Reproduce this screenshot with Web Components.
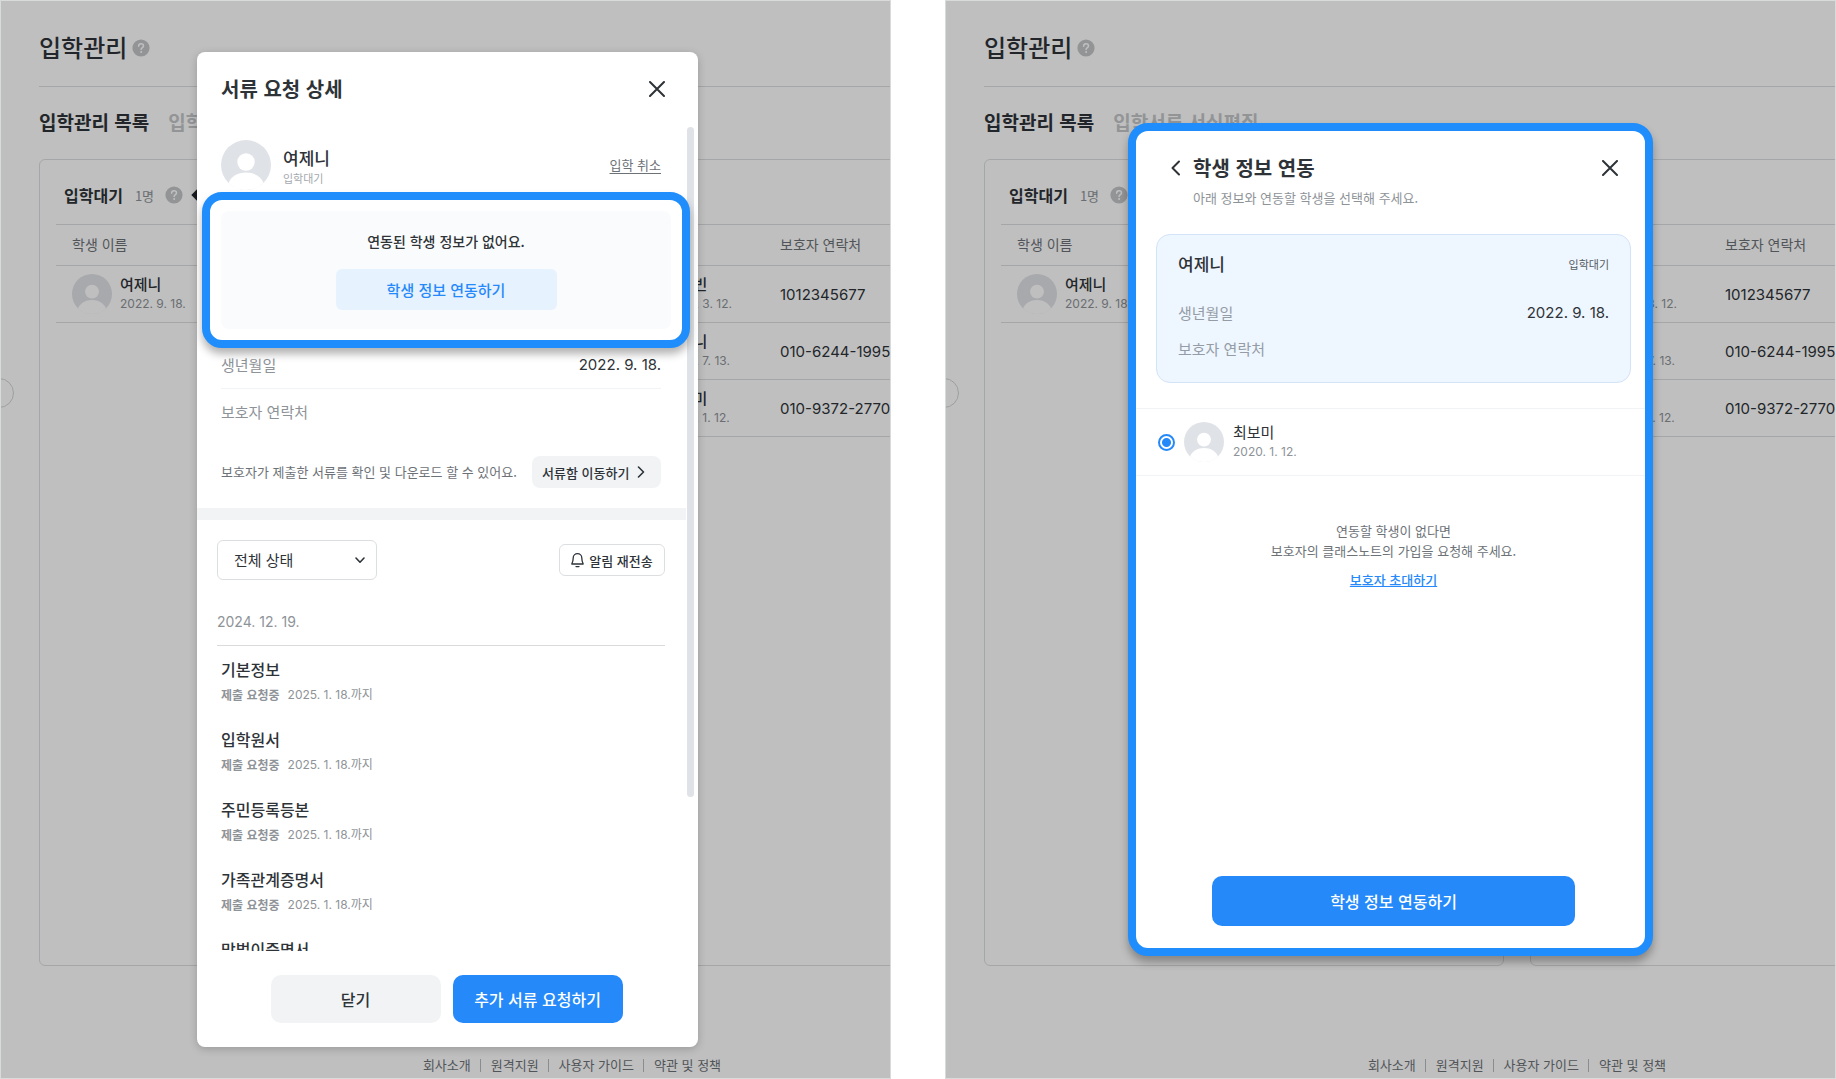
<!DOCTYPE html>
<html lang="ko">
<head>
<meta charset="UTF-8">
<meta name="viewport" content="width=device-width, initial-scale=1.0">
<title>입학관리</title>
<style>
    body {
        margin: 0;
        min-height: 100vh;
        display: grid;
        grid-template-columns: minmax(0, 1fr) minmax(0, 1fr);
        gap: 54px;
        background: #fff;
        color: #2e3338;
        font-family: "Noto Sans CJK KR", sans-serif;
        font-size: 15px;
        --num: Inter, "Noto Sans CJK KR", sans-serif;
        --blue: #2589fa;
        --frame: #1f8dfb;
    }
</style>
</head>
<body>
    <app-screen>
        <admission-page></admission-page>
        <request-modal slot="modal"></request-modal>
    </app-screen>
    <app-screen centered>
        <admission-page></admission-page>
        <link-modal slot="modal"></link-modal>
    </app-screen>

<script>
    class UserAvatar extends HTMLElement {
        constructor() {
            super();
            this.attachShadow({ mode: 'open' });
            this.shadowRoot.innerHTML = `
                <style>
                    :host { display: block; flex: none; width: 40px; height: 40px; }
                    svg { display: block; width: 100%; height: 100%; }
                </style>
                <svg viewBox="0 0 50 50" aria-hidden="true">
                    <circle cx="25" cy="25" r="25" fill="#dfe2e7"/>
                    <circle cx="25" cy="22" r="8.7" fill="#fff"/>
                    <path d="M7.5 43C10 36.500 17 32.500 25 32.500S40 36.500 42.500 43C38 47.500 32 50 25 50S12 47.500 7.500 43Z" fill="#fff"/>
                </svg>
            `;
        }
    }

    class HelpButton extends HTMLElement {
        constructor() {
            super();
            this.attachShadow({ mode: 'open' });
            this.shadowRoot.innerHTML = `
                <style>
                    :host { display: block; flex: none; width: 18px; height: 18px; }
                    button { display: block; width: 100%; height: 100%; padding: 0; border: 0; background: none; }
                    svg { display: block; width: 100%; height: 100%; }
                </style>
                <button type="button" aria-label="도움말">
                    <svg viewBox="0 0 18 18" fill="none">
                        <circle cx="9" cy="9" r="8.600" fill="#c3c6c9"/>
                        <path d="M6.600 7.200C6.600 5.700 7.700 4.800 9.100 4.800S11.500 5.700 11.500 7C11.500 8.700 9.100 8.700 9.100 10.500" stroke="#fff" stroke-width="1.500" stroke-linecap="round"/>
                        <circle cx="9.100" cy="13" r="1" fill="#fff"/>
                    </svg>
                </button>
            `;
        }
    }

    // one browser window: the page, a dimmed layer and a modal on top
    class AppScreen extends HTMLElement {
        constructor() {
            super();
            this.attachShadow({ mode: 'open' });
            this.shadowRoot.innerHTML = `
                <style>
                    :host { display: grid; position: relative; overflow: hidden; border: 1px solid #d9dbdb; background: #fff; }
                    .dim { position: absolute; inset: 0; display: grid; justify-content: start; padding: 51px 0 31px 196px; background: rgba(0, 0, 0, 0.25); }
                    :host([centered]) .dim { justify-content: center; padding: 122px 0; }
                </style>
                <slot></slot>
                <div class="dim"><slot name="modal"></slot></div>
            `;
        }
    }

    class StudentTable extends HTMLElement {
        connectedCallback() {
            const students = JSON.parse(this.getAttribute('students'));
            const rows = students.map(([name, birth, phone]) => `
                <tr>
                    <td>
                        <div class="student">
                            <user-avatar></user-avatar>
                            <div><b>${name}</b><span>${birth}</span></div>
                        </div>
                    </td>
                    <td class="phone">${phone}</td>
                </tr>
            `).join('');

            this.attachShadow({ mode: 'open' });
            this.shadowRoot.innerHTML = `
                <style>
                    :host { display: block; box-sizing: border-box; padding: 0 16px; border: 1px solid #dcdee0; border-radius: 6px; }
                    header { display: flex; align-items: center; height: 64px; padding-top: 6px; padding-left: 8px; box-sizing: border-box; }
                    table { width: 100%; border-collapse: collapse; table-layout: fixed; }
                    th, td { box-sizing: border-box; padding: 0 16px; border-top: 1px solid #dcdee0; border-bottom: 1px solid #dcdee0; text-align: left; white-space: nowrap; }
                    th { height: 41px; padding-bottom: 2px; color: #6d7277; font-size: 14px; font-weight: 400; }
                    th:first-child { width: 162px; }
                    td { height: 57px; }
                    .student { display: flex; align-items: center; gap: 8px; }
                    b, span { display: block; line-height: 20px; }
                    b { font-weight: 500; }
                    span { color: #8e9398; font: 12px/20px var(--num); }
                    .phone { font-family: var(--num); }
                </style>
                <header><slot></slot></header>
                <table>
                    <thead><tr><th>학생 이름</th><th>${students[0][2] ? '보호자 연락처' : ''}</th></tr></thead>
                    <tbody>${rows}</tbody>
                </table>
            `;
        }
    }

    class AdmissionPage extends HTMLElement {
        constructor() {
            super();
            this.attachShadow({ mode: 'open' });
            this.shadowRoot.innerHTML = `
                <style>
                    :host { display: flex; flex-direction: column; box-sizing: border-box; min-width: 1142px; padding: 0 38px; }
                    .top { display: flex; align-items: center; gap: 5px; height: 86px; padding-top: 8px; box-sizing: border-box; border-bottom: 1px solid #dcdee0; }
                    h1, h2 { margin: 0; }
                    h1 { font-size: 24px; font-weight: 500; line-height: 32px; padding-bottom: 2px; }
                    nav { display: flex; gap: 19px; align-items: center; height: 72px; padding-bottom: 4px; box-sizing: border-box; font-size: 19px; font-weight: 700; }
                    nav a { color: #c3c6c9; text-decoration: none; }
                    nav a[aria-current] { color: inherit; }
                    main { flex: 1; display: grid; grid-template-columns: 520px 520px; gap: 26px; }
                    h2 { font-size: 16px; font-weight: 700; }
                    .count { margin: 0 11px 0 12px; color: #8e9398; font-size: 13px; }
                    .tip { width: 8px; height: 8px; margin-left: 10px; background: #202327; transform: rotate(45deg); }
                    footer { display: flex; justify-content: center; align-items: end; height: 112px; padding-bottom: 3px; box-sizing: border-box; font-size: 13px; line-height: 20px; }
                    footer a { padding: 0 10px; color: #6d7277; text-decoration: none; background: linear-gradient(#b9bcbf, #b9bcbf) right / 1px 13px no-repeat; }
                    footer a:last-child { background: none; }
                    .fold { position: absolute; left: -17px; top: 377px; width: 30px; height: 30px; padding: 0; border: 1px solid #d2d4d6; border-radius: 50%; background: #fff; }
                </style>
                <div class="top"><h1>입학관리</h1><help-button></help-button></div>
                <nav><a href="#list" aria-current="page">입학관리 목록</a><a href="#forms">입학서류 서식편집</a></nav>
                <main>
                    <student-table students='[["여제니", "2022. 9. 18.", ""]]'>
                        <h2>입학대기</h2><span class="count">1명</span><help-button></help-button><i class="tip"></i>
                    </student-table>
                    <student-table students='[["정수빈", "2020. 3. 12.", "1012345677"], ["이하니", "2020. 7. 13.", "010-6244-1995"], ["최보미", "2020. 1. 12.", "010-9372-2770"]]'></student-table>
                </main>
                <footer>
                    <a href="#about">회사소개</a><a href="#remote">원격지원</a><a href="#guide">사용자 가이드</a><a href="#terms">약관 및 정책</a>
                </footer>
                <button class="fold" type="button" aria-label="메뉴 접기"></button>
            `;
        }
    }

    const closeIcon = `<svg width="16" height="16" viewBox="0 0 16 16" fill="none" stroke="#2e3338" stroke-width="2" stroke-linecap="round"><path d="M1 1L15 15M15 1L1 15"/></svg>`;

    class RequestModal extends HTMLElement {
        constructor() {
            super();
            this.attachShadow({ mode: 'open' });
            const due = '<p><strong>제출 요청중</strong><span>2025. 1. 18.까지</span></p>';
            const docs = [['기본정보', due], ['입학원서', due], ['주민등록등본', due], ['가족관계증명서', due], ['맞벌이증명서', '']];

            this.shadowRoot.innerHTML = `
                <style>
                    :host { display: flex; flex-direction: column; width: 501px; min-height: 0; border-radius: 8px; background: #fff; box-shadow: 0 2px 8px rgba(0, 0, 0, 0.2); }
                    button, select { font: inherit; color: inherit; border: 0; padding: 0; }
                    svg { display: block; flex: none; }
                    .head { display: flex; justify-content: space-between; align-items: center; height: 75px; box-sizing: border-box; padding: 0 33px 2px 24px; }
                    h2, h3, p, dl, dd, ul { margin: 0; padding: 0; }
                    h2 { font-size: 20px; font-weight: 700; }
                    .close { background: none; }
                    .body { position: relative; flex: 1; min-height: 0; overflow: hidden; }
                    .thumb { position: absolute; top: 0; right: 4px; width: 7px; height: 670px; border-radius: 4px; background: #dfe2e6; }
                    .profile { display: flex; align-items: center; gap: 12px; padding: 13px 37px 0 24px; }
                    .profile user-avatar { width: 50px; height: 50px; }
                    .profile div { flex: 1; }
                    .profile b { display: block; padding-top: 2px; font-size: 17px; font-weight: 500; line-height: 24px; }
                    .profile span { display: block; color: #a4a9ae; font-size: 11px; line-height: 16px; }
                    .profile a { color: #6d7277; font-size: 13px; line-height: 20px; text-underline-offset: 3px; }
                    .linkbox { position: relative; z-index: 1; margin: 2px 8px 0 5px; padding: 11px; border: 8px solid var(--frame); border-radius: 20px; background: #fff; box-shadow: 0 6px 8px rgba(0, 0, 0, 0.3); }
                    .linkbox div { display: flex; flex-direction: column; align-items: center; gap: 18px; padding: 20px 0 19px; border-radius: 8px; background: #fafbfc; font-size: 14px; font-weight: 500; line-height: 20px; }
                    .linkbox button { width: 221px; height: 41px; border-radius: 6px; background: #e7f2ff; color: var(--blue); font-size: 15px; }
                    dl { margin: 6px 37px 0 24px; }
                    dl div { display: flex; justify-content: space-between; padding-bottom: 12px; line-height: 22px; }
                    dl div + div { padding-top: 12px; border-top: 1px solid #f1f3f5; }
                    dt { color: #8e9398; }
                    dd { font-family: var(--num); }
                    .move { display: flex; justify-content: space-between; align-items: center; margin: 21px 37px 20px 24px; color: #6d7277; font-size: 13px; }
                    .move p { padding-bottom: 2px; }
                    .move button { display: flex; align-items: center; justify-content: space-between; width: 129px; height: 32px; padding: 0 16px 0 10px; box-sizing: border-box; border-radius: 8px; background: #f1f3f5; color: #2e3338; font-weight: 500; }
                    hr { height: 12px; margin: 0 12px 0 0; border: 0; background: #f1f3f4; }
                    .filter { display: flex; justify-content: space-between; align-items: center; margin: 20px 33px 0 20px; }
                    .select { display: grid; align-items: center; }
                    .select > * { grid-area: 1 / 1; }
                    .select svg { justify-self: end; margin-right: 12px; pointer-events: none; }
                    select { appearance: none; width: 160px; height: 40px; padding: 0 16px 2px; border: 1px solid #dcdee0; border-radius: 6px; background: #fff; }
                    .filter button { display: flex; align-items: center; justify-content: center; gap: 5px; width: 106px; height: 32px; border: 1px solid #dcdee0; border-radius: 6px; background: #fff; font-size: 13px; font-weight: 500; }
                    h3 { margin: 32px 33px 0 20px; padding-bottom: 13px; border-bottom: 1px solid #d8dadc; color: #8e9398; font: 14px/20px var(--num); }
                    ul { display: grid; gap: 22px; padding: 11px 24px 0; list-style: none; }
                    li b { display: block; margin-bottom: 4px; font-size: 16px; font-weight: 500; line-height: 24px; }
                    li p { display: flex; gap: 8px; color: #8e9398; font-size: 12px; line-height: 20px; }
                    li strong { font-weight: 700; }
                    li span { font-family: var(--num); }
                    .foot { display: flex; justify-content: center; gap: 12px; padding: 24px 2px 24px 0; }
                    .foot button { width: 170px; height: 48px; border-radius: 10px; background: #f1f3f5; font-size: 16px; font-weight: 500; }
                    .foot .primary { background: var(--blue); color: #fff; }
                </style>
                <div class="head">
                    <h2>서류 요청 상세</h2>
                    <button class="close" type="button" aria-label="창 닫기">${closeIcon}</button>
                </div>
                <div class="body">
                    <div class="thumb"></div>
                    <div class="profile">
                        <user-avatar></user-avatar>
                        <div><b>여제니</b><span>입학대기</span></div>
                        <a href="#cancel">입학 취소</a>
                    </div>
                    <div class="linkbox">
                        <div>연동된 학생 정보가 없어요.<button type="button">학생 정보 연동하기</button></div>
                    </div>
                    <dl>
                        <div><dt>생년월일</dt><dd>2022. 9. 18.</dd></div>
                        <div><dt>보호자 연락처</dt><dd></dd></div>
                    </dl>
                    <div class="move">
                        <p>보호자가 제출한 서류를 확인 및 다운로드 할 수 있어요.</p>
                        <button type="button">서류함 이동하기
                            <svg width="8" height="12" viewBox="0 0 8 12" fill="none" stroke="#2e3338" stroke-width="1.600" stroke-linecap="round" stroke-linejoin="round"><path d="M1.500 1L6.500 6L1.500 11"/></svg>
                        </button>
                    </div>
                    <hr>
                    <div class="filter">
                        <div class="select">
                            <select aria-label="상태"><option>전체 상태</option></select>
                            <svg width="10" height="7" viewBox="0 0 10 7" fill="none" stroke="#2e3338" stroke-width="1.600" stroke-linecap="round" stroke-linejoin="round"><path d="M1 1L5 5.200L9 1"/></svg>
                        </div>
                        <button type="button">
                            <svg width="13" height="16" viewBox="0 0 13 16" fill="none" stroke="#2e3338" stroke-width="1.300" stroke-linecap="round" stroke-linejoin="round"><path d="M2.200 6A4.300 4.300 0 0 1 10.800 6C10.800 8.800 11.300 10.200 12.200 12H0.800C1.700 10.200 2.200 8.800 2.200 6ZM5 14.600H8"/></svg>
                            알림 재전송
                        </button>
                    </div>
                    <h3>2024. 12. 19.</h3>
                    <ul>
                        ${docs.map(([name, state]) => `<li><b>${name}</b>${state}</li>`).join('')}
                    </ul>
                </div>
                <div class="foot">
                    <button type="button">닫기</button>
                    <button class="primary" type="button">추가 서류 요청하기</button>
                </div>
            `;
        }
    }

    class LinkModal extends HTMLElement {
        constructor() {
            super();
            this.attachShadow({ mode: 'open' });
            this.shadowRoot.innerHTML = `
                <style>
                    :host { display: flex; flex-direction: column; box-sizing: border-box; width: 525px; padding-left: 6px; border: 8px solid var(--frame); border-radius: 20px; background: #fff; box-shadow: 0 6px 8px rgba(0, 0, 0, 0.3); }
                    button { font: inherit; border: 0; padding: 0; background: none; }
                    svg { display: block; }
                    h2, p, dl, dd { margin: 0; }
                    .head { display: grid; grid-template-columns: 22px 1fr auto; align-items: center; row-gap: 6px; padding: 23px 27px 0 29px; }
                    h2 { font-size: 20px; font-weight: 700; line-height: 28px; }
                    .head p { grid-column: 2; color: #8e9398; font-size: 13px; line-height: 20px; }
                    .card { margin: 26px 14px 0; padding: 17px 21px 22px; border: 1px solid #d3e3f8; border-radius: 14px; background: #eef6ff; }
                    .name { display: flex; justify-content: space-between; align-items: center; margin-bottom: 26px; font-size: 17px; font-weight: 500; line-height: 24px; }
                    .name span { color: #555b61; font-size: 11px; font-weight: 400; }
                    dl { display: grid; gap: 14px; line-height: 22px; }
                    dl div { display: flex; justify-content: space-between; }
                    dt { color: #959ca5; }
                    dd { font-family: var(--num); }
                    label { display: flex; align-items: center; height: 66px; margin: 25px 0 0 -6px; padding-left: 22px; border: solid #f1f3f5; border-width: 1px 0; }
                    input { appearance: none; width: 17px; height: 17px; margin: 0 9px 0 0; border: 2px solid var(--blue); border-radius: 50%; background: radial-gradient(circle, var(--blue) 4px, #fff 5px); }
                    user-avatar { margin-right: 9px; }
                    label b, label span span { display: block; line-height: 20px; }
                    label b { font-weight: 400; }
                    label span span { color: #8e9398; font: 12px/20px var(--num); }
                    .empty { flex: 1; margin-top: 45px; text-align: center; color: #6d7277; font-size: 13px; line-height: 20px; }
                    .empty a { display: inline-block; margin-top: 9px; color: var(--blue); font-weight: 500; }
                    .submit { align-self: center; width: 363px; height: 50px; margin-bottom: 22px; border-radius: 10px; background: var(--blue); color: #fff; font-size: 16px; font-weight: 500; }
                </style>
                <div class="head">
                    <button type="button" aria-label="뒤로">
                        <svg width="10" height="16" viewBox="0 0 10 16" fill="none" stroke="#2e3338" stroke-width="2" stroke-linecap="round" stroke-linejoin="round"><path d="M8 1.500L1.500 8L8 14.500"/></svg>
                    </button>
                    <h2>학생 정보 연동</h2>
                    <button type="button" aria-label="창 닫기">${closeIcon}</button>
                    <p>아래 정보와 연동할 학생을 선택해 주세요.</p>
                </div>
                <div class="card">
                    <div class="name">여제니<span>입학대기</span></div>
                    <dl>
                        <div><dt>생년월일</dt><dd>2022. 9. 18.</dd></div>
                        <div><dt>보호자 연락처</dt><dd></dd></div>
                    </dl>
                </div>
                <label>
                    <input type="radio" name="student" checked>
                    <user-avatar></user-avatar>
                    <span><b>최보미</b><span>2020. 1. 12.</span></span>
                </label>
                <div class="empty">
                    <p>연동할 학생이 없다면<br>보호자의 클래스노트의 가입을 요청해 주세요.</p>
                    <a href="#invite">보호자 초대하기</a>
                </div>
                <button class="submit" type="button">학생 정보 연동하기</button>
            `;
        }
    }

    customElements.define('user-avatar', UserAvatar);
    customElements.define('help-button', HelpButton);
    customElements.define('app-screen', AppScreen);
    customElements.define('student-table', StudentTable);
    customElements.define('admission-page', AdmissionPage);
    customElements.define('request-modal', RequestModal);
    customElements.define('link-modal', LinkModal);
</script>
</body>
</html>
